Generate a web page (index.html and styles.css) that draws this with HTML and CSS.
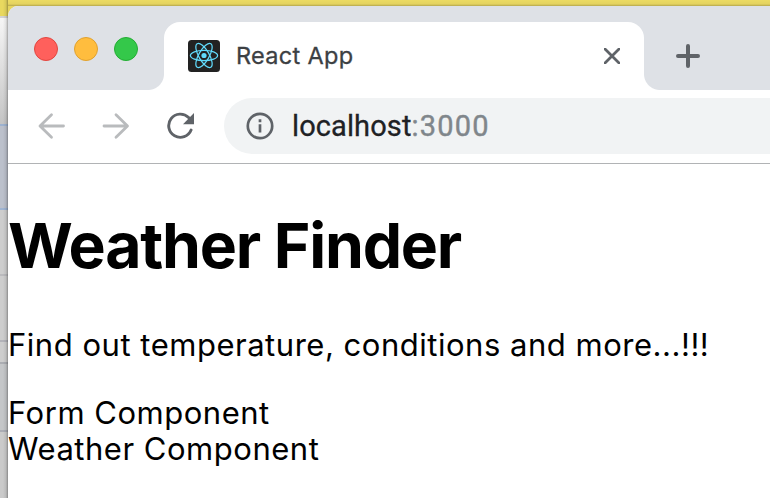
FILE: index.html
```
<!DOCTYPE html>
<html lang="en">
<head>
<meta charset="utf-8">
<title>React App</title>
<link rel="stylesheet" href="styles.css">
</head>
<body>
<div class="desktop">
  <div class="behind"></div>
  <div class="window">
    <header class="tabstrip">
      <div class="lights"><i class="red"></i><i class="amber"></i><i class="green"></i></div>
      <div class="tab">
        <svg class="favicon" viewBox="0 0 32 32"><rect width="32" height="32" rx="3.5" fill="#222"/><g fill="none" stroke="#61dafb" stroke-width="1.25"><ellipse cx="16" cy="15.5" rx="13.6" ry="5.2"/><ellipse cx="16" cy="15.5" rx="13.6" ry="5.2" transform="rotate(60 16 15.5)"/><ellipse cx="16" cy="15.5" rx="13.6" ry="5.2" transform="rotate(120 16 15.5)"/></g><circle cx="16" cy="15.5" r="2.6" fill="#61dafb"/></svg>
        <span class="title">React App</span>
        <svg class="close" viewBox="0 0 16 16"><path d="M1 1L15 15M15 1L1 15"/></svg>
      </div>
      <svg class="plus" viewBox="0 0 24 24"><path d="M2 12H22M12 2V22"/></svg>
    </header>
    <nav class="toolbar">
      <svg class="arrow" viewBox="0 0 28 28"><path d="M25.5 14H2.5M13.5 2.7L2 14L13.5 25.3"/></svg>
      <svg class="arrow" viewBox="0 0 28 28"><path d="M2 14H25M14 2.7L25.5 14L14 25.3"/></svg>
      <svg class="reload" viewBox="0 0 28 28"><path class="arc" d="M22.6 5.6A11.6 11.6 0 1 0 25.1 18"/><path class="head" d="M28 1V12.2H17Z"/></svg>
      <div class="address">
        <svg class="info" viewBox="0 0 28 28"><circle cx="14" cy="14" r="12.2"/><path d="M14 12.3V20.4M14 7.3V10.2"/></svg>
        <span class="host">localhost</span><span class="port">:3000</span>
      </div>
    </nav>
    <main>
      <h1>Weather Finder</h1>
      <p class="lead">Find out temperature, conditions and more...!!!</p>
      <div class="form">Form Component</div>
      <div class="weather">Weather Component</div>
    </main>
  </div>
</div>
</body>
</html>
```
FILE: styles.css
```
* { box-sizing: border-box; }
body { margin: 0; overflow: hidden; font-family: Inter, "Liberation Sans", sans-serif; }
svg { display: block; fill: none; flex: none; }
.desktop {
  width: 770px; height: 498px; display: flex; padding-top: 6px;
  background: linear-gradient(#ecdb63, #e4d360 4px, #b5a74c 6px, #e5d55f 6px, #e5d55f 15px, #c9c9c9 15px);
}
.behind {
  width: 8px; margin-top: -6px; flex: none;
  background:
    linear-gradient(90deg, transparent 3px, rgba(0,0,0,.08) 6px, rgba(0,0,0,.32) 8px),
    linear-gradient(#e8d85f 0 16px, #d2d2d2 16px 18px, #f6f6f6 18px, #c4c4c4 124px, #9db2d0 124px 126px, #bbc0cb 126px 208px, #9fb4d2 208px 210px, #cdcdcd 210px 274px, #bababd 274px 276px, #cdcdcd 276px 340px, #b3b3b9 340px 342px, #cdcdcd 342px 362px, #abadb2 362px 364px, #c4c6c8 364px 430px, #abadb5 430px 432px, #cacaca 432px);
}
.window { flex: 1; background: #fff; border-top-left-radius: 10px; overflow: hidden; }
.tabstrip { height: 84px; display: flex; background: #dee1e6; }
.lights { width: 156px; padding: 31px 0 0 26px; display: flex; gap: 16px; }
.lights i { width: 24px; height: 24px; border-radius: 50%; border: 1px solid; }
.red { background: #ff605c; border-color: #e2463f !important; }
.amber { background: #ffbd3e; border-color: #e0a12f !important; }
.green { background: #34c84a; border-color: #23ad33 !important; }
.tab {
  position: relative; width: 480px; height: 68px; margin-top: 16px; padding: 0 24px;
  display: flex; align-items: center; background: #fff; border-radius: 16px 16px 0 0;
}
.tab::before, .tab::after { content: ""; position: absolute; bottom: 0; width: 16px; height: 16px; }
.tab::before { left: -16px; background: radial-gradient(circle at 0 0, transparent 15.5px, #fff 16.5px); }
.tab::after { right: -16px; background: radial-gradient(circle at 100% 0, transparent 15.5px, #fff 16.5px); }
.favicon { width: 32px; height: 32px; }
.title { flex: 1; margin-left: 16px; font-size: 23.5px; line-height: 30px; color: #3c4043; letter-spacing: .3px; -webkit-text-stroke: .3px #3c4043; }
.close { width: 16px; height: 16px; stroke: #5f6368; stroke-width: 2.8; stroke-linecap: round; }
.plus { width: 24px; height: 24px; margin: 38px 0 0 32px; stroke: #5f6368; stroke-width: 4; stroke-linecap: round; }
.toolbar { height: 74px; display: flex; align-items: center; padding: 0 0 2px 30px; border-bottom: 1px solid #b1b3b5; }
.arrow { width: 28px; height: 28px; margin-right: 36px; stroke: #b9bbbd; stroke-width: 2.8; stroke-linecap: round; stroke-linejoin: round; }
.reload { width: 28px; height: 28px; margin-right: 30px; }
.arc { stroke: #5f6368; stroke-width: 2.9; stroke-linecap: round; }
.head { fill: #5f6368; }
.address { flex: 1; height: 56px; padding-left: 22px; display: flex; align-items: center; background: #f1f3f4; border-radius: 28px 0 0 28px; font-family: Roboto, sans-serif; font-size: 29px; }
.info { width: 28px; height: 28px; margin-right: 18px; stroke: #5f6368; stroke-width: 2.7; }
.host { color: #202124; letter-spacing: .1px; -webkit-text-stroke: .3px #202124; }
.port { color: #80868b; letter-spacing: 1.2px; -webkit-text-stroke: .4px #80868b; }
main { padding-top: 43px; color: #000; }
h1 { margin: 0; font-size: 62.5px; line-height: 76px; font-weight: 700; letter-spacing: -1.2px; }
p { margin: 44px 0 32px; }
p, .form, .weather { font-size: 31px; line-height: 36px; letter-spacing: .52px; white-space: nowrap; }
```
